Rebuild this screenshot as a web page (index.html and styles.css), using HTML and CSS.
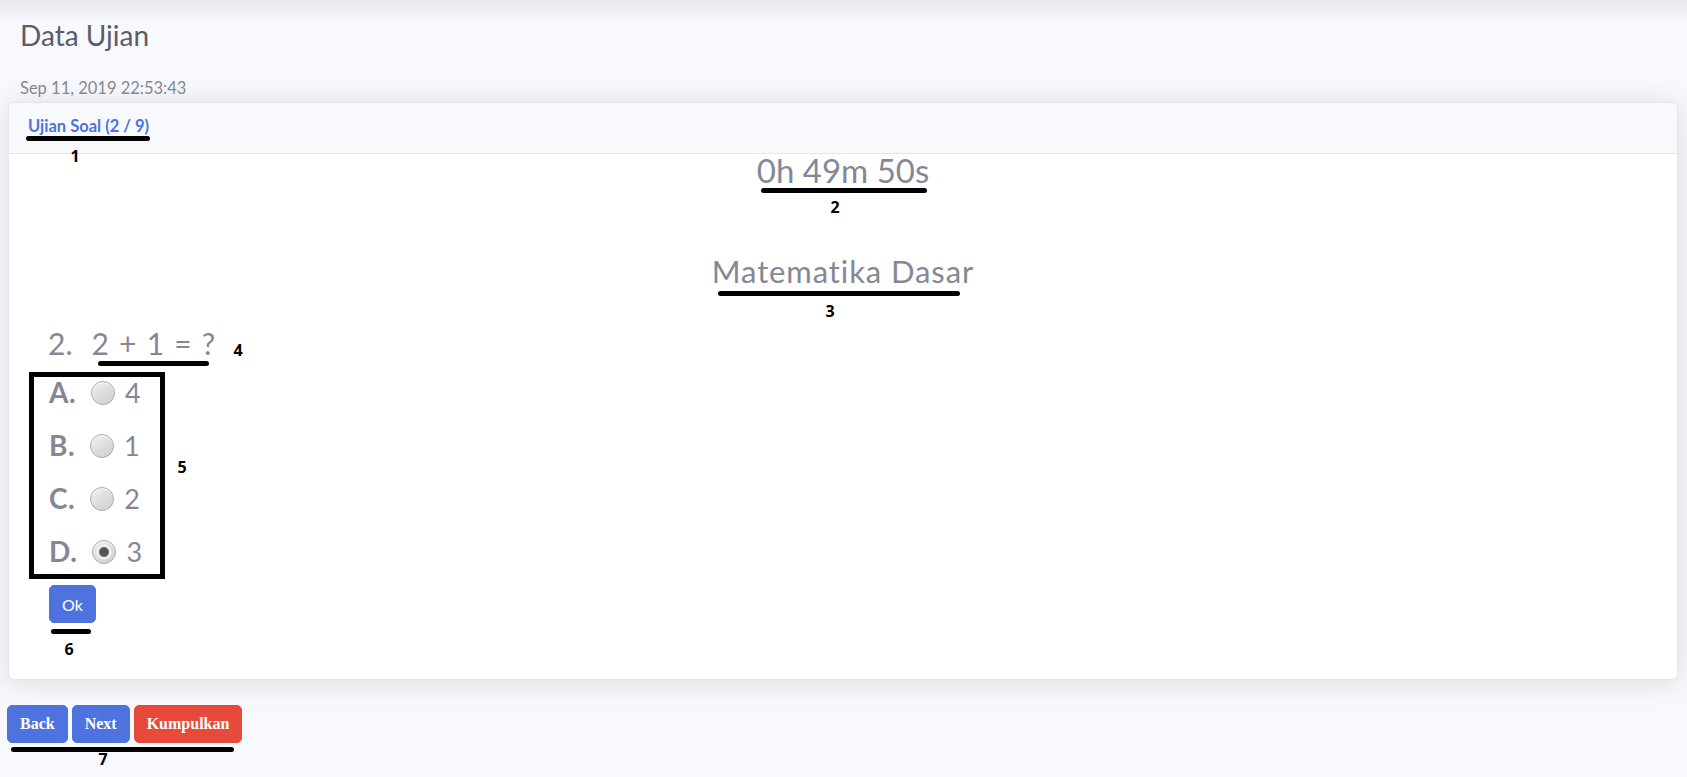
FILE: index.html
```html
<!DOCTYPE html>
<html lang="id">
<head>
<meta charset="utf-8">
<title>Data Ujian</title>
<link rel="stylesheet" href="styles.css">
</head>
<body>
<div class="page">
  <h1 class="title">Data Ujian</h1>
  <div class="date">Sep 11, 2019 22:53:43</div>
  <div class="card">
    <div class="card-header"><h6 class="card-title">Ujian Soal (2 / 9)</h6></div>
    <div class="card-body">
      <div class="timer">0h 49m 50s</div>
      <h3 class="subject">Matematika Dasar</h3>
      <div class="question"><span class="qno">2.</span><span class="qtext">2 + 1 = ?</span></div>
      <div class="options">
        <label class="option"><span class="opt-letter">A.</span><input type="radio" name="jawab" class="radio"><span class="opt-value">4</span></label>
        <label class="option"><span class="opt-letter">B.</span><input type="radio" name="jawab" class="radio"><span class="opt-value">1</span></label>
        <label class="option"><span class="opt-letter">C.</span><input type="radio" name="jawab" class="radio"><span class="opt-value">2</span></label>
        <label class="option"><span class="opt-letter">D.</span><input type="radio" name="jawab" class="radio" checked><span class="opt-value">3</span></label>
      </div>
      <button class="btn-ok" type="button">Ok</button>
    </div>
  </div>
  <div class="nav-buttons">
    <button class="btn-nav btn-blue" type="button">Back</button>
    <button class="btn-nav btn-blue" type="button">Next</button>
    <button class="btn-nav btn-red" type="button">Kumpulkan</button>
  </div>
</div>

<div class="annotations" aria-hidden="true">
  <div class="bar bar-1"></div><div class="num num-1">1</div>
  <div class="bar bar-2"></div><div class="num num-2">2</div>
  <div class="bar bar-3"></div><div class="num num-3">3</div>
  <div class="bar bar-4"></div><div class="num num-4">4</div>
  <div class="box-5"></div><div class="num num-5">5</div>
  <div class="bar bar-6"></div><div class="num num-6">6</div>
  <div class="bar bar-7"></div><div class="num num-7">7</div>
</div>
</body>
</html>
```

FILE: styles.css
```css
html {
  height: 100%;
  background: #f8f9fc;
}
body {
  margin: 0;
  height: 100%;
  font-family: "Lato", "Open Sans", sans-serif;
  color: #858796;
  position: relative;
  overflow: hidden;
}
.page {
  box-sizing: border-box;
  height: 100%;
  padding: 18px 9px 0 8px;
  background: linear-gradient(to bottom, rgba(58, 59, 69, 0.09), rgba(58, 59, 69, 0) 22px) no-repeat;
}
.title {
  margin: 0 0 0 12px;
  font-size: 28px;
  line-height: 34px;
  font-weight: 400;
  color: #5a5c69;
}
.date {
  margin: 26px 0 0 12px;
  font-size: 16.5px;
  line-height: 20px;
  color: #858796;
}
.card {
  margin-top: 4px;
  background: #fff;
  border: 1px solid #e3e6f0;
  border-radius: 5.6px;
  box-shadow: 0 2.4px 28px 0 rgba(58, 59, 69, 0.15);
  overflow: hidden;
}
.card-header {
  background: #f8f9fc;
  border-bottom: 1px solid #e3e6f0;
  padding: 13px 19px 17px;
}
.card-title {
  margin: 0;
  font-size: 16.5px;
  line-height: 20px;
  font-weight: 700;
  color: #4e73df;
}
.card-body {
  padding: 0 20px 56px;
}
.timer {
  text-align: center;
  font-size: 33px;
  line-height: 32px;
  color: #858796;
}
.subject {
  margin: 67px 0 0;
  text-align: center;
  font-size: 31px;
  line-height: 36px;
  letter-spacing: 0.9px;
  font-weight: 400;
  color: #858796;
}
.question {
  margin: 36px 0 0 19px;
  font-size: 30px;
  line-height: 36px;
  color: #858796;
}
.qtext {
  margin-left: 19px;
  word-spacing: 2.5px;
}
.options {
  margin: 5px 0 0 20px;
  display: flex;
  flex-direction: column;
}
.option {
  display: flex;
  align-items: center;
  height: 53px;
  font-size: 27px;
  line-height: 53px;
  color: #858796;
}
.opt-letter {
  font-weight: 700;
  font-size: 28px;
  letter-spacing: 0.5px;
}
.radio {
  appearance: none;
  -webkit-appearance: none;
  margin: 0 0 0 15px;
  width: 24px;
  height: 24px;
  border-radius: 50%;
  border: 1px solid #ababab;
  background: linear-gradient(145deg, #f3f3f3 0%, #dcdcdc 55%, #cfcfcf 100%);
  box-shadow: inset 0 1px 1px rgba(255, 255, 255, 0.8);
}
.radio:checked {
  background:
    radial-gradient(circle, #555 0 4px, #6a6a6a 4.5px, #f2f2f2 5.5px, #ececec 7px, rgba(236, 236, 236, 0) 8px),
    linear-gradient(145deg, #f3f3f3 0%, #dcdcdc 55%, #cfcfcf 100%);
}
.opt-value {
  margin-left: 10px;
}
.btn-ok {
  display: block;
  margin: 7px 0 0 20px;
  height: 38px;
  padding: 0 12px;
  border: 1px solid #4e73df;
  border-radius: 5px;
  background: #4e73df;
  color: #fff;
  font-family: "Lato", "Open Sans", sans-serif;
  font-size: 16px;
}
.nav-buttons {
  display: flex;
  gap: 4px;
  margin: 25px 0 0 -1px;
}
.btn-nav {
  height: 38px;
  padding: 0 12px;
  border-radius: 5px;
  color: #fff;
  font-family: "Liberation Serif", "Times New Roman", serif;
  font-weight: 700;
  font-size: 16px;
}
.btn-blue {
  background: #4e73df;
  border: 1px solid #4e73df;
}
.btn-red {
  background: #e74a3b;
  border: 1px solid #e74a3b;
}

/* annotation overlay drawn over the screenshot */
.annotations {
  position: absolute;
  top: 0;
  left: 0;
  width: 100%;
  height: 100%;
  pointer-events: none;
}
.bar {
  position: absolute;
  height: 5px;
  background: #000;
  border-radius: 3px;
}
.bar-1 { left: 26px; top: 136px; width: 124px; }
.bar-2 { left: 761px; top: 188px; width: 166px; }
.bar-3 { left: 718px; top: 291px; width: 242px; }
.bar-4 { left: 98px; top: 361px; width: 111px; }
.bar-6 { left: 51px; top: 629px; width: 40px; height: 4.5px; }
.bar-7 { left: 11px; top: 747px; width: 223px; }
.box-5 {
  position: absolute;
  left: 29px;
  top: 372px;
  width: 126px;
  height: 197px;
  border: 5px solid #000;
}
.num {
  position: absolute;
  width: 20px;
  text-align: center;
  font-family: "Open Sans", sans-serif;
  font-weight: 700;
  font-size: 16px;
  line-height: 16px;
  color: #000;
}
.num-1 { left: 65px; top: 148px; }
.num-2 { left: 825px; top: 199px; }
.num-3 { left: 820px; top: 303px; }
.num-4 { left: 228px; top: 342px; }
.num-5 { left: 172px; top: 459px; }
.num-6 { left: 59px; top: 641px; }
.num-7 { left: 93px; top: 751px; }
```
